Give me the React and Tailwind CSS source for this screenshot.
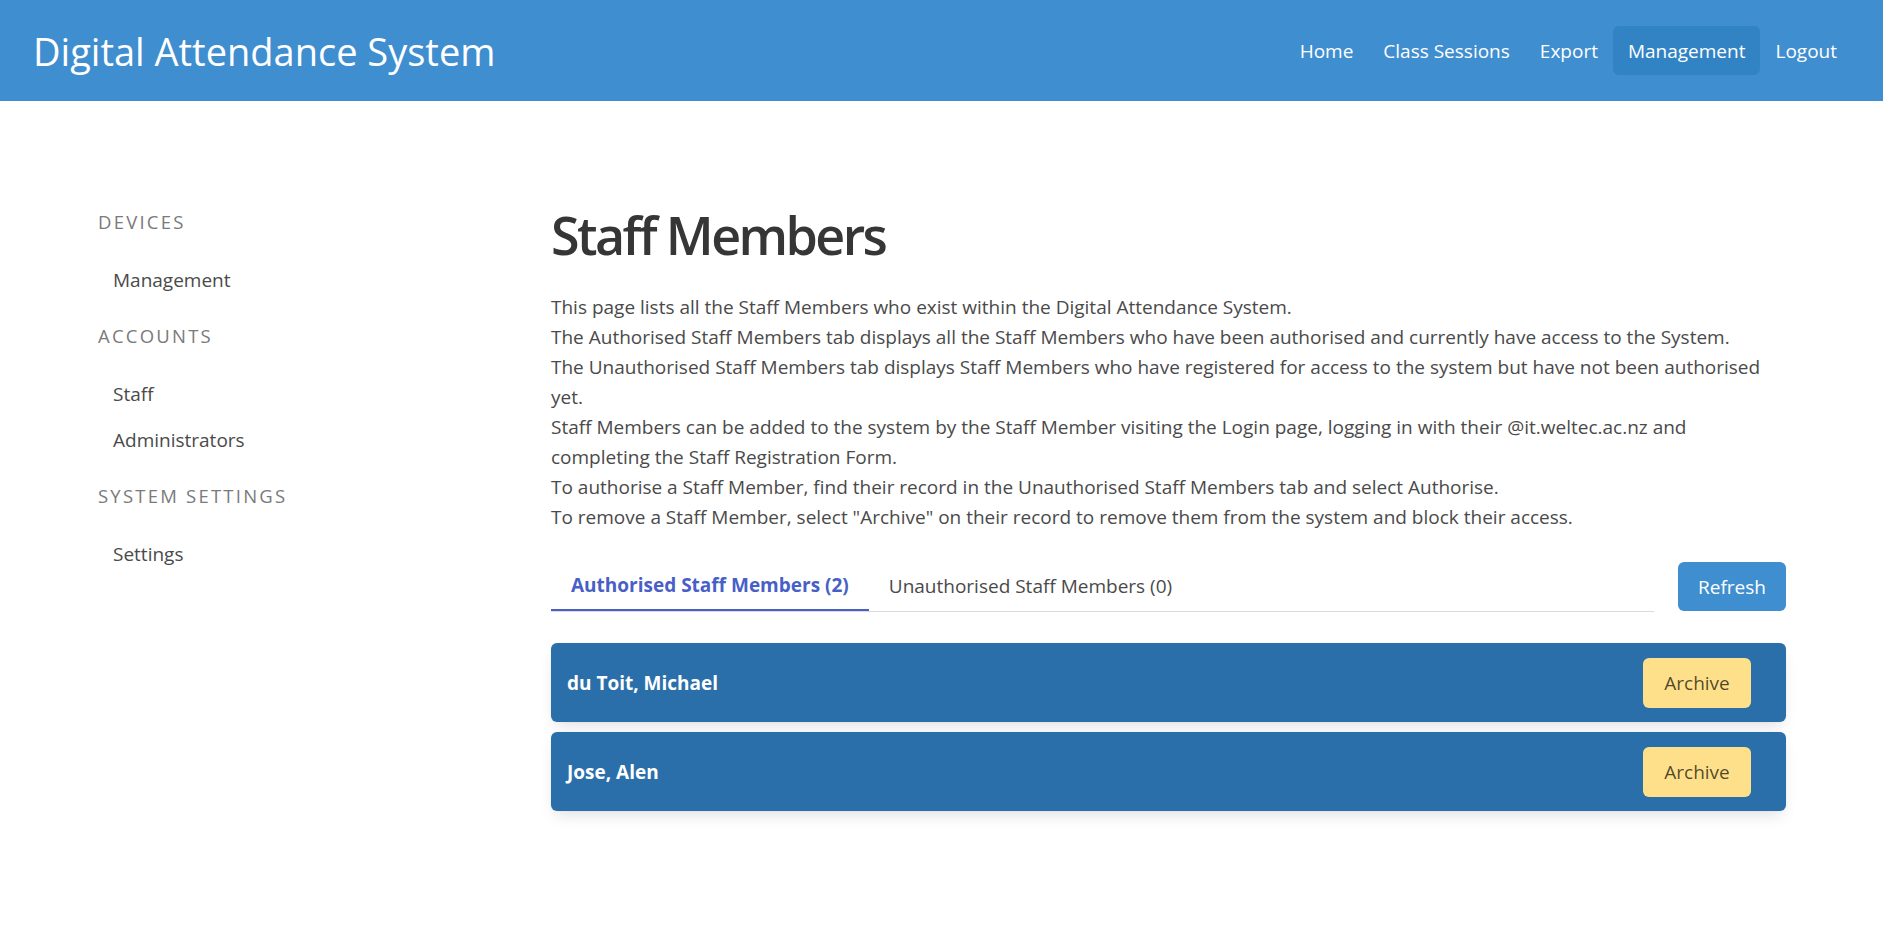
import React from 'react'

const navLinks = ['Home', 'Class Sessions', 'Export', 'Management', 'Logout']

const menu = [
  { label: 'Devices', items: ['Management'] },
  { label: 'Accounts', items: ['Staff', 'Administrators'] },
  { label: 'System Settings', items: ['Settings'] }
]

const introLines = [
  'This page lists all the Staff Members who exist within the Digital Attendance System.',
  'The Authorised Staff Members tab displays all the Staff Members who have been authorised and currently have access to the System.',
  'The Unauthorised Staff Members tab displays Staff Members who have registered for access to the system but have not been authorised',
  'yet.',
  'Staff Members can be added to the system by the Staff Member visiting the Login page, logging in with their @it.weltec.ac.nz and',
  'completing the Staff Registration Form.',
  'To authorise a Staff Member, find their record in the Unauthorised Staff Members tab and select Authorise.',
  'To remove a Staff Member, select "Archive" on their record to remove them from the system and block their access.'
]

const staff = ['du Toit, Michael', 'Jose, Alen']

const App = () => {
  return (
    <div className="min-h-screen bg-white text-[#4a4a4a] font-['Open_Sans',sans-serif] text-[19px] leading-[30px]">
      <nav className="h-[101px] bg-[#3f8ed0] flex items-center justify-between pl-[33px] pr-[31px]">
        <div className="text-white text-[38px] leading-[50px]">Digital Attendance System</div>
        <div className="flex items-center">
          {navLinks.map((link) => (
            <a
              key={link}
              className={`px-[15px] h-[49px] flex items-center text-white rounded-md ${link === 'Management' ? 'bg-[#3283c4]' : ''}`}
            >
              {link}
            </a>
          ))}
        </div>
      </nav>

      <div className="flex px-[97px]">
        <aside className="w-[454px] shrink-0 pt-[106px]">
          {menu.map((group) => (
            <div key={group.label} className="mb-[18px]">
              <p className="h-[30px] flex items-center pl-px text-[18.5px] uppercase tracking-[0.12em] text-[#7a7a7a]">
                {group.label}
              </p>
              <ul className="mt-5">
                {group.items.map((item) => (
                  <li key={item} className="h-[46px] flex items-center pl-[16px] text-[#4a4a4a]">
                    {item}
                  </li>
                ))}
              </ul>
            </div>
          ))}
        </aside>

        <main className="flex-1 pt-[100px] pb-20">
          <h1 className="text-[52px] leading-[67px] font-semibold tracking-[-0.05em] text-[#363636]">Staff Members</h1>
          <div className="mt-6">
            {introLines.map((line, i) => (
              <div key={i} className="whitespace-nowrap">{line}</div>
            ))}
          </div>

          <div className="mt-[29px] flex items-end gap-[24px]">
            <div className="flex-1 flex border-b border-[#dbdbdb]">
              <a className="px-[20px] h-[50px] flex items-center font-bold text-[#485fc7] border-b-2 border-[#485fc7] -mb-px">
                Authorised Staff Members (2)
              </a>
              <a className="px-[20px] h-[50px] flex items-center text-[#4a4a4a]">
                Unauthorised Staff Members (0)
              </a>
            </div>
            <button className="mb-px w-[108px] h-[49px] rounded-md bg-[#3f8ed0] text-white">Refresh</button>
          </div>

          <div className="mt-[31px] flex flex-col gap-[10px]">
            {staff.map((name) => (
              <div
                key={name}
                className="h-[79px] rounded-md bg-[#2a6fa9] flex items-center justify-between pl-[16px] pr-[35px] shadow-[0_8px_16px_-4px_rgba(10,10,10,0.12),0_0_0_1px_rgba(10,10,10,0.02)]"
              >
                <span className="font-bold text-white">{name}</span>
                <button className="w-[108px] h-[50px] rounded-md bg-[#ffe08a] text-[rgba(0,0,0,0.7)]">Archive</button>
              </div>
            ))}
          </div>
        </main>
      </div>
    </div>
  )
}

export default App
